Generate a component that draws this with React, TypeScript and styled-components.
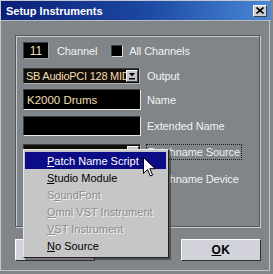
import styled, { createGlobalStyle } from "styled-components";

const GlobalStyle = createGlobalStyle`
  html, body {
    margin: 0;
    padding: 0;
    background: #80858a;
  }
  * {
    box-sizing: border-box;
  }
`;

const Window = styled.div`
  position: relative;
  width: 273px;
  height: 274px;
  background: #80858a;
  font-family: "Liberation Sans", Arial, sans-serif;
  font-size: 11px;
  color: #f2f2f2;
  display: flex;
  flex-direction: column;
  padding: 1px 2px 0 1px;
  box-shadow: inset -3px -3px 0 #80858a, inset -4px -4px 0 #c4c8cc,
    inset 1px 1px 0 #c4c8cc;
  overflow: hidden;
`;

const TitleBar = styled.div`
  height: 20px;
  display: flex;
  align-items: center;
  justify-content: space-between;
  padding: 0 4px 0 5px;
  background: linear-gradient(90deg, #0b1f77 0%, #1c4aa4 55%, #4a88d6 100%);
  border-bottom: 1px solid #b8bcc0;
`;

const Title = styled.span`
  color: #ffffff;
  font-weight: 700;
  font-size: 11px;
`;

const CloseButton = styled.div`
  width: 14px;
  height: 12px;
  background: #d0d0d4;
  border: 1px solid;
  border-color: #ffffff #404040 #404040 #ffffff;
  display: flex;
  align-items: center;
  justify-content: center;
`;

const Body = styled.div`
  flex: 1;
  display: flex;
  flex-direction: column;
  padding: 14px 10px 0 14px;
`;

const GroupBox = styled.div`
  width: 245px;
  height: 192px;
  border: 1px solid #555a5f;
  box-shadow: inset 1px 1px 0 #c8ccd0, 1px 1px 0 #c8ccd0;
  padding: 5px 7px;
  display: flex;
  flex-direction: column;
`;

const Row = styled.div<{ $mt?: number; $h: number }>`
  display: flex;
  align-items: center;
  height: ${(p) => p.$h}px;
  margin-top: ${(p) => p.$mt ?? 0}px;
`;

const Field = styled.div<{ $w: number }>`
  width: ${(p) => p.$w}px;
  height: 100%;
  background: #000000;
  color: #f3dfb4;
  border: 1px solid;
  border-color: #3a3e42 #e6e6e6 #e6e6e6 #3a3e42;
  display: flex;
  align-items: center;
  padding-left: 3px;
  white-space: nowrap;
  overflow: hidden;
  font-size: 11.5px;
`;

const NumberBox = styled(Field)`
  justify-content: center;
  padding-left: 0;
  border-color: #3a3e42 #9ca0a4 #9ca0a4 #3a3e42;
  font-size: 12px;
`;

const Combo = styled(Field)`
  position: relative;
  background: #120e08;
  border-color: #3a3e42 #b0b4b8 #b0b4b8 #3a3e42;
  padding-left: 2px;
  padding-right: 14px;
  font-size: 11px;
  letter-spacing: -0.25px;
`;

const ComboButton = styled.div`
  position: absolute;
  right: 1px;
  top: 1px;
  bottom: 1px;
  width: 12px;
  background: #c4c4c8;
  border: 1px solid;
  border-color: #ffffff #404040 #404040 #ffffff;
  display: flex;
  align-items: center;
  justify-content: center;
`;

const Label = styled.span<{ $ml?: number }>`
  margin-left: ${(p) => p.$ml ?? 6}px;
  white-space: nowrap;
  letter-spacing: -0.1px;
`;

const FocusLabel = styled(Label)`
  outline: 1px dotted #202020;
  outline-offset: 1px;
`;

const CheckBox = styled.div`
  width: 12px;
  height: 12px;
  margin-left: 14px;
  background: #000;
  border: 1px solid;
  border-color: #3a3e42 #dcdcdc #dcdcdc #3a3e42;
`;

const ButtonRow = styled.div`
  display: flex;
  justify-content: space-between;
  width: 246px;
  margin-top: 12px;
`;

const Button = styled.div`
  width: 80px;
  height: 22px;
  background: #d2d2da;
  color: #000;
  font-weight: 700;
  font-size: 12px;
  border: 1px solid;
  border-color: #ffffff #303030 #303030 #ffffff;
  display: flex;
  align-items: center;
  justify-content: center;
  letter-spacing: 0.5px;
`;

const Menu = styled.div`
  position: absolute;
  left: 23px;
  top: 149px;
  width: 146px;
  padding: 2px 2px 3px 1px;
  background: #c6c6c6;
  border: 1px solid;
  border-color: #e8e8e8 #202020 #202020 #e8e8e8;
  box-shadow: 2px 2px 0 rgba(40, 40, 40, 0.55);
  display: flex;
  flex-direction: column;
`;

const MenuItem = styled.div<{ $active?: boolean; $disabled?: boolean }>`
  height: 17px;
  display: flex;
  align-items: center;
  padding-left: 22px;
  font-size: 11px;
  white-space: nowrap;
  background: ${(p) => (p.$active ? "#0c0c86" : "transparent")};
  color: ${(p) =>
    p.$active ? "#ffffff" : p.$disabled ? "#8c8c8c" : "#000000"};
  text-shadow: ${(p) => (p.$disabled ? "1px 1px 0 #f4f4f4" : "none")};
`;

const Cursor = styled.svg`
  position: absolute;
  left: 143px;
  top: 157px;
`;

const DownArrow = () => (
  <svg width="8" height="8" viewBox="0 0 8 8">
    <path d="M1 1h6L4 4.5z" fill="#000" />
    <rect x="1" y="6" width="6" height="1.5" fill="#000" />
  </svg>
);

const menuItems = [
  { pre: "", key: "P", rest: "atch Name Script", active: true },
  { pre: "", key: "S", rest: "tudio Module" },
  { pre: "S", key: "o", rest: "undFont", disabled: true },
  { pre: "", key: "O", rest: "mni VST Instrument", disabled: true },
  { pre: "", key: "V", rest: "ST Instrument", disabled: true },
  { pre: "", key: "N", rest: "o Source" },
];

export default function App() {
  return (
    <>
      <GlobalStyle />
      <Window>
        <TitleBar>
          <Title>Setup Instruments</Title>
          <CloseButton>
            <svg width="8" height="7" viewBox="0 0 8 7">
              <path d="M0.5 0.5L7.5 6.5M7.5 0.5L0.5 6.5" stroke="#000" strokeWidth="1.6" />
            </svg>
          </CloseButton>
        </TitleBar>
        <Body>
          <GroupBox>
            <Row $h={17} $mt={1}>
              <NumberBox $w={26}>11</NumberBox>
              <Label $ml={8}>Channel</Label>
              <CheckBox />
              <Label $ml={6}>All Channels</Label>
            </Row>
            <Row $h={16} $mt={9}>
              <Combo $w={117}>
                SB AudioPCI 128 MIDI
                <ComboButton>
                  <DownArrow />
                </ComboButton>
              </Combo>
              <Label $ml={7}>Output</Label>
            </Row>
            <Row $h={21} $mt={5}>
              <Field $w={118}>K2000 Drums</Field>
              <Label>Name</Label>
            </Row>
            <Row $h={20} $mt={6}>
              <Field $w={118} />
              <Label>Extended Name</Label>
            </Row>
            <Row $h={16} $mt={8}>
              <Combo $w={118}>
                <ComboButton>
                  <DownArrow />
                </ComboButton>
              </Combo>
              <FocusLabel $ml={7}>Patchname Source</FocusLabel>
            </Row>
            <Row $h={16} $mt={11}>
              <Combo $w={118}>
                <ComboButton>
                  <DownArrow />
                </ComboButton>
              </Combo>
              <Label $ml={7}>Patchname Device</Label>
            </Row>
          </GroupBox>
          <ButtonRow>
            <Button>
              <u>C</u>ancel
            </Button>
            <Button>
              <u>O</u>K
            </Button>
          </ButtonRow>
        </Body>
        <Menu>
          {menuItems.map((m) => (
            <MenuItem key={m.rest} $active={m.active} $disabled={m.disabled}>
              {m.pre}
              <u>{m.key}</u>
              {m.rest}
            </MenuItem>
          ))}
        </Menu>
        <Cursor width="13" height="20" viewBox="0 0 13 20">
          <path
            d="M0.5 0.5V16.5L4.5 12.5L7.3 19L9.6 18L6.8 11.7H12.2Z"
            fill="#ffffff"
            stroke="#000000"
            strokeWidth="1"
            strokeLinejoin="miter"
          />
        </Cursor>
      </Window>
    </>
  );
}
